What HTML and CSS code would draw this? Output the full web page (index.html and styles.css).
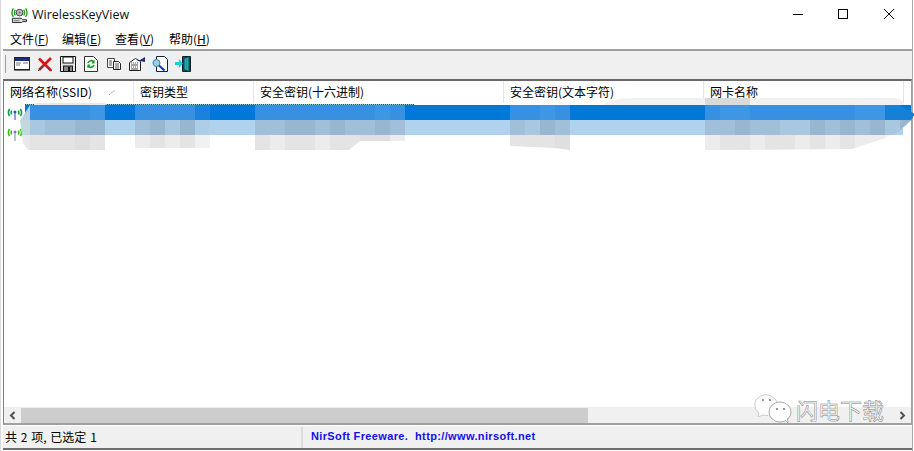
FILE: index.html
```html
<!DOCTYPE html>
<html lang="zh">
<head>
<meta charset="utf-8">
<title>WirelessKeyView</title>
<link rel="stylesheet" href="styles.css">
</head>
<body>
<div class="window">
  <header class="titlebar">
    <svg class="appicon" width="17" height="18" viewBox="0 0 18 18"><path d="M2.500 2C.5 5 .5 8 2.500 11M4.500 3.500C3.500 5.500 3.500 7.500 4.500 9.500M15.500 2C17.500 5 17.500 8 15.500 11M13.500 3.500C14.500 5.500 14.500 7.500 13.500 9.500" fill="none" stroke="#169a16" stroke-width="1.400"/><circle cx="9" cy="6.500" r="3.500" fill="#c4c4c4" stroke="#333"/><circle cx="9" cy="6.500" r="1" fill="#555"/><path d="M1.500 12.500h9.500l1.500 1.500 4 0v2h-4l-1.500 1h-9.500z" fill="#dcdcdc" stroke="#222"/><path d="M3 15h6" stroke="#777"/></svg>
    <span class="apptitle">WirelessKeyView</span>
    <div class="winbtns">
      <svg width="46" height="29" viewBox="0 0 46 29"><path d="M19 14.500h10" stroke="#000"/></svg>
      <svg width="46" height="29" viewBox="0 0 46 29"><rect x="18.500" y="9.500" width="9" height="9" fill="none" stroke="#000"/></svg>
      <svg width="46" height="29" viewBox="0 0 46 29"><path d="M18 9l10 10M28 9L18 19" stroke="#000" fill="none"/></svg>
    </div>
  </header>
  <nav class="menubar">
    <span>文件(<u>F</u>)</span><span>编辑(<u>E</u>)</span><span>查看(<u>V</u>)</span><span>帮助(<u>H</u>)</span>
  </nav>
  <div class="frame">
    <div class="toolbar">
      <i class="tsep"></i>
      <span class="tool"><svg width="16" height="16" viewBox="0 0 16 16"><rect x=".5" y="1.500" width="15" height="12" fill="#fff" stroke="#222"/><rect x="1" y="2" width="14" height="3" fill="#1c2f78"/><path d="M2 7h5M9 7h5M2 9h4" stroke="#777"/><path d="M0 14.500h16" stroke="#777"/></svg></span>
      <span class="tool"><svg width="16" height="16" viewBox="0 0 16 16"><path d="M2 2.500l12 12M14 2l-12 12" stroke="#e01010" stroke-width="2.600"/><path d="M1 15l5-5M10 11l5 4" stroke="#444"/></svg></span>
      <span class="tool"><svg width="16" height="16" viewBox="0 0 16 16"><path d="M.5.500h15v15H.5z" fill="#e8e8e8" stroke="#111"/><rect x="3" y="1" width="10" height="6" fill="#fff" stroke="#111"/><rect x="3.500" y="10" width="9" height="5.500" fill="#888" stroke="#111"/><rect x="8" y="11" width="2" height="4" fill="#111"/></svg></span>
      <span class="tool"><svg width="14" height="16" viewBox="0 0 14 16"><path d="M.5.500h9l4 4v11H.5z" fill="#fff" stroke="#333"/><path d="M4 7a3.500 3.500 0 0 1 6-1M10 9a3.500 3.500 0 0 1-6 1" fill="none" stroke="#119a22" stroke-width="1.700"/><path d="M10.500 3.500v4h-3zM3.500 12.500v-4h3z" fill="#119a22"/></svg></span>
      <span class="tool"><svg width="16" height="16" viewBox="0 0 16 16"><path d="M1.500 2.500h7v9h-7z" fill="#fff" stroke="#444"/><path d="M7.500 5.500h5l2 2v6h-7z" fill="#fff" stroke="#222"/><path d="M3 5h3M3 7h3M3 9h3M9 8h4M9 10h4M9 12h4" stroke="#555"/></svg></span>
      <span class="tool"><svg width="16" height="16" viewBox="0 0 16 16"><path d="M.5 6.500l6-4 5 3v9h-11z" fill="#fff" stroke="#222"/><path d="M2 7h1M4 7h1M6 7h1M8 7h1M2 9h7M2 11h1M4 11h1M6 11h1M8 11h1M2 13h7" stroke="#444"/><path d="M7 4h4l5-3v5l-5-1z" fill="#1c2f78"/></svg></span>
      <span class="tool hot"><svg width="16" height="16" viewBox="0 0 16 16"><path d="M4.500.500h8l3 3v12h-11z" fill="#fff" stroke="#222"/><circle cx="4.500" cy="7" r="3.500" fill="#8ed4e8" stroke="#5a7a90"/><path d="M7 9.500l5.500 5" stroke="#1138c8" stroke-width="2.200"/></svg></span>
      <span class="tool"><svg width="16" height="16" viewBox="0 0 16 16"><path d="M7.500.500h8v15h-8z" fill="#0a5c66" stroke="#122"/><path d="M9 2.500l5-2v15l-5-2z" fill="#22a0ac" stroke="#122" stroke-width=".6"/><path d="M0 6h4V3l4 4.500L4 12V9H0z" fill="#14d4e0"/></svg></span>
    </div>
    <div class="listview">
      <div class="lhead">
        <span class="c1">网络名称(SSID)<svg class="sort" width="8" height="8" viewBox="0 0 8 8"><path d="M1 6.500h1M3 5.500l2-2M6 2.500v1" stroke="#999"/></svg></span>
        <span class="c2">密钥类型</span>
        <span class="c3">安全密钥(十六进制)</span>
        <span class="c4">安全密钥(文本字符)</span>
        <span class="c5">网卡名称</span>
      </div>
      <div class="lbody">
        <div class="lrow sel">
          <svg class="rowicon" width="16" height="15" viewBox="0 0 16 15"><path d="M2.500 1C1 3.500 1 5.500 2.500 8M4.500 2.500C4 4 4 5 4.500 6.500M13.500 1C15 3.500 15 5.500 13.500 8M11.500 2.500C12 4 12 5 11.500 6.500" fill="none" stroke="#0f9a4a" stroke-width="1.600"/><circle cx="8" cy="4" r="1.500" fill="#2a52c0"/><path d="M8 5v7" stroke="#6a7ac8" stroke-width="1.400"/></svg>
          <div class="fill"></div>
        </div>
        <div class="lrow sel2">
          <svg class="rowicon low" width="16" height="15" viewBox="0 0 16 15"><path d="M2.500 1C1 3.500 1 5.500 2.500 8M4.500 2.500C4 4 4 5 4.500 6.500M13.500 1C15 3.500 15 5.500 13.500 8M11.500 2.500C12 4 12 5 11.500 6.500" fill="none" stroke="#35bf12" stroke-width="1.600"/><circle cx="8" cy="4" r="1.500" fill="#7a76b8"/><path d="M8 5v8" stroke="#a8a4cc" stroke-width="1.400"/></svg>
          <div class="fill"></div>
        </div>
        <i class="focusline"></i>
        <i class="fringe fr1"></i>
        <i class="fringe fr2"></i>
        <i class="fringe fr3"></i>
        <div class="mosaic m1">
          <div class="mrow r1"><i class="e"></i><i></i><i></i><i></i><i></i><i class="l"></i></div>
          <div class="mrow r2"><i class="e"></i><i class="l"></i><i></i><i></i><i class="d"></i><i class="d"></i></div>
          <div class="mrow r3"><i class="e"></i><i></i><i></i><i></i><i class="d"></i><i></i></div>
        </div>
        <div class="mosaic m2">
          <div class="mrow r1"><i></i><i></i><i></i><i></i><i class="x"></i></div>
          <div class="mrow r2"><i></i><i class="d"></i><i class="l"></i><i class="d"></i><i class="x"></i></div>
          <div class="mrow r3"><i class="l"></i><i></i><i class="l"></i><i></i><i class="x"></i></div>
        </div>
        <div class="mosaic m3">
          <div class="mrow r1"><i></i><i></i><i></i><i></i><i></i><i></i><i></i><i></i><i class="l"></i><i></i></div>
          <div class="mrow r2"><i></i><i></i><i class="d"></i><i class="d"></i><i></i><i class="d"></i><i></i><i></i><i class="d"></i><i></i></div>
          <div class="mrow r3"><i></i><i class="l"></i><i></i><i></i><i class="l"></i><i></i><i></i><i class="d"></i><i class="d"></i><i class="l"></i></div>
        </div>
        <div class="mosaic m4">
          <div class="mrow r1"><i></i><i></i><i class="l"></i><i></i></div>
          <div class="mrow r2"><i></i><i class="l"></i><i class="d"></i><i></i></div>
          <div class="mrow r3"><i></i><i></i><i></i><i class="d"></i></div>
        </div>
        <div class="mosaic m5">
          <div class="mrow r1"><i></i><i class="l"></i><i class="l"></i><i></i><i></i><i></i><i></i><i></i><i></i><i></i><i class="l"></i><i class="l"></i><i class="dk"></i><i class="dk"></i></div>
          <div class="mrow r2"><i></i><i></i><i class="d"></i><i></i><i></i><i class="l"></i><i class="l"></i><i class="d"></i><i></i><i class="d"></i><i></i><i class="d"></i><i class="l"></i><i class="d"></i></div>
          <div class="mrow r3"><i class="l"></i><i></i><i></i><i class="l"></i><i></i><i></i><i class="l"></i><i></i><i class="l"></i><i></i><i class="l"></i><i class="l"></i><i class="w"></i><i class="w"></i></div>
        </div>
      </div>
      <div class="hscroll">
        <svg class="arrow" width="17" height="15" viewBox="0 0 17 15"><path d="M10.500 4L7 7.500l3.500 3.500" fill="none" stroke="#505050" stroke-width="2"/></svg>
        <div class="track"><div class="thumb"></div></div>
        <svg class="arrow" width="17" height="15" viewBox="0 0 17 15"><path d="M6.500 4L10 7.500 6.500 11" fill="none" stroke="#505050" stroke-width="2"/></svg>
      </div>
    </div>
    <footer class="status">
      <span class="count">共 2 项, 已选定 1</span>
      <span class="credit">NirSoft Freeware.&nbsp; http://www.nirsoft.net</span>
    </footer>
  </div>
  <div class="mark">
    <svg width="44" height="32" viewBox="0 0 44 32"><path d="M24 9C21 3 15 1 11 2 5 3 1 8 2 13c0 3 2 5 4 7l-1 4 5-2c2 .5 3 .5 5 .5" fill="#fff" stroke="#ccc"/><ellipse cx="27" cy="19" rx="11" ry="10" fill="#fff" stroke="#aaa"/><path d="M32 27l3 3-.5-5" fill="#fff" stroke="#aaa"/><path d="M9 7h2M16 7h2M23 16h2M30 16h2" stroke="#777" stroke-width="1.500"/></svg>
    <span>闪电下载</span>
  </div>
</div>
</body>
</html>
```
FILE: styles.css
```css
* { box-sizing: border-box; }
html, body { margin: 0; height: 100%; background: #fff; overflow: hidden; }
body { font: 12px "Noto Sans CJK SC", "Liberation Sans", sans-serif; color: #000; }
.window { position: relative; width: 913px; height: 451px; padding-left: 2px; border-left: 1px solid #d8d8d8; border-right: 1px solid #a8a8a8; display: flex; flex-direction: column; }
.titlebar { height: 29px; display: flex; align-items: center; flex: none; }
.appicon { margin: 0 4px 0 8px; }
.apptitle { font: 12.5px "Open Sans", sans-serif; color: #111; }
.winbtns { margin-left: auto; display: flex; }
.winbtns svg { display: block; }
.menubar { height: 20px; flex: none; display: flex; gap: 14px; padding-left: 7px; align-items: center; line-height: 20px; }
.menubar span { width: 39px; white-space: nowrap; }
.menubar span:first-child { margin-right: -1px; }
.menubar span:nth-child(3) { margin-right: 1px; }
.frame { flex: 1; display: flex; flex-direction: column; border-top: 2px solid #a0a0a0; border-bottom: 2px solid #707070; margin-bottom: 1px; min-height: 0; }
.toolbar { height: 28px; background: #f0f0f0; display: flex; align-items: center; padding: 0 0 3px 2px; flex: none; }
.tsep { width: 1px; height: 18px; background: #a0a0a0; margin-right: 4px; }
.tool { width: 23px; height: 21px; display: flex; align-items: center; justify-content: center; }
.tool svg { display: block; }
.hot { background: #e7f1f9; }
.listview { flex: 1; display: flex; flex-direction: column; min-height: 0; border: 1px solid #a0a0a0; border-top: 2px solid #696969; border-left: 1px solid #808080; border-bottom: 2px solid #a0a0a0; background: #fff; }
.lhead { height: 24px; display: flex; flex: none; line-height: 21px; position: relative; }
.lhead span { padding-left: 6px; border-right: 1px solid #e5e5e5; height: 22px; position: relative; white-space: nowrap; }
.c1 { width: 130px; }
.c2 { width: 120px; }
.c3 { width: 250px; }
.c4 { width: 200px; }
.c5 { width: 200px; }
.sort { position: absolute; left: 104px; top: 7px; }
.lbody { flex: 1; position: relative; min-height: 0; }
.lrow { height: 15px; display: flex; align-items: flex-start; padding-left: 3px; }
.rowicon { display: block; flex: none; margin-top: 3px; }
.rowicon.low { margin-top: 8px; }
.fill { flex: 1; height: 15px; margin-left: 2px; }
.sel .fill { background: #0078d7; }
.sel2 .fill { background: #afd2ee; margin-right: 8px; }
.focusline { position: absolute; left: 21px; top: -1px; width: 389px; height: 1px; background: repeating-linear-gradient(90deg, #1a4f90 0 1px, #9cc 1px 2px); }
.fringe { position: absolute; top: -2px; height: 2px; background: #e8e8e8; }
.fr1 { left: 30px; width: 72px; border-radius: 6px 6px 0 0; }
.fr2 { left: 600px; width: 300px; top: -7px; height: 7px; background: #f1f1f1; border-radius: 30px 10px 0 0 / 7px 7px 0 0; }
.fr3 { left: 701px; width: 45px; top: -7px; height: 7px; background: #dadada; }
.mosaic { position: absolute; top: 0; display: flex; flex-direction: column; overflow: hidden; }
.mrow { display: flex; height: 15px; }
.mrow i { width: 15px; height: 15px; flex: none; }
.r1 i { background: #3790e0; }
.r1 .l { background: #3f96e2; }
.r1 .d { background: #2b86dc; }
.r1 .dk { background: #187fd6; }
.r1 .x { background: #1a82da; }
.r2 i { background: #a1bfd9; }
.r2 .l { background: #a9c8e0; }
.r2 .d { background: #98b6d0; }
.r2 .x { background: #aecde6; }
.r3 i { background: #e4e4e4; }
.r3 .l { background: #ececec; }
.r3 .d { background: #dfdfdf; }
.r3 .x { background: #f0f1f3; }
.r3 .w { background: #f5f5f5; }
.e { width: 10px !important; }
.r1 .e { background: #b6d3e4; }
.r2 .e { background: #c3d8dc; }
.r3 .e { background: #e9e9e9; }
.m1 { left: 16px; clip-path: polygon(10px 0, 100% 0, 100% 100%, 8px 100%, 3px 85%, 0 35%); }
.m2 { left: 131px; height: 43px; }
.m3 { left: 251px; clip-path: polygon(0 0, 100% 0, 100% 36px, 105px 36px, 94px 45px, 0 45px); }
.m4 { left: 506px; clip-path: polygon(0 0, 100% 0, 100% 100%, 45px 43px, 0 41px); }
.m5 { left: 701px; width: 210px; clip-path: polygon(0 0, 93% 0, 100% 20%, 98% 35%, 92% 60%, 85% 75%, 70% 98%, 0 100%); }
.hscroll { height: 16px; flex: none; background: #f0f0f0; display: flex; align-items: center; }
.arrow { flex: none; display: block; }
.track { flex: 1; height: 15px; }
.thumb { width: 567px; height: 15px; background: #cdcdcd; }
.status { flex: none; height: 23px; background: #f0f0f0; display: flex; align-items: center; border-top: 1px solid #fff; }
.count { width: 300px; height: 21px; padding-left: 2px; line-height: 19px; word-spacing: 1.1px; border-right: 2px solid #dcdcdc; white-space: nowrap; }
.credit { font: bold 11px "Liberation Sans", sans-serif; letter-spacing: .36px; color: #1010e8; padding-left: 8px; white-space: pre; margin-top: -2px; }
.mark { position: absolute; left: 752px; top: 393px; display: flex; align-items: center; }
.mark svg { display: block; }
.mark span { font-size: 22px; line-height: 30px; color: #fff; -webkit-text-stroke: .5px #808080; margin-left: -1px; }
```
